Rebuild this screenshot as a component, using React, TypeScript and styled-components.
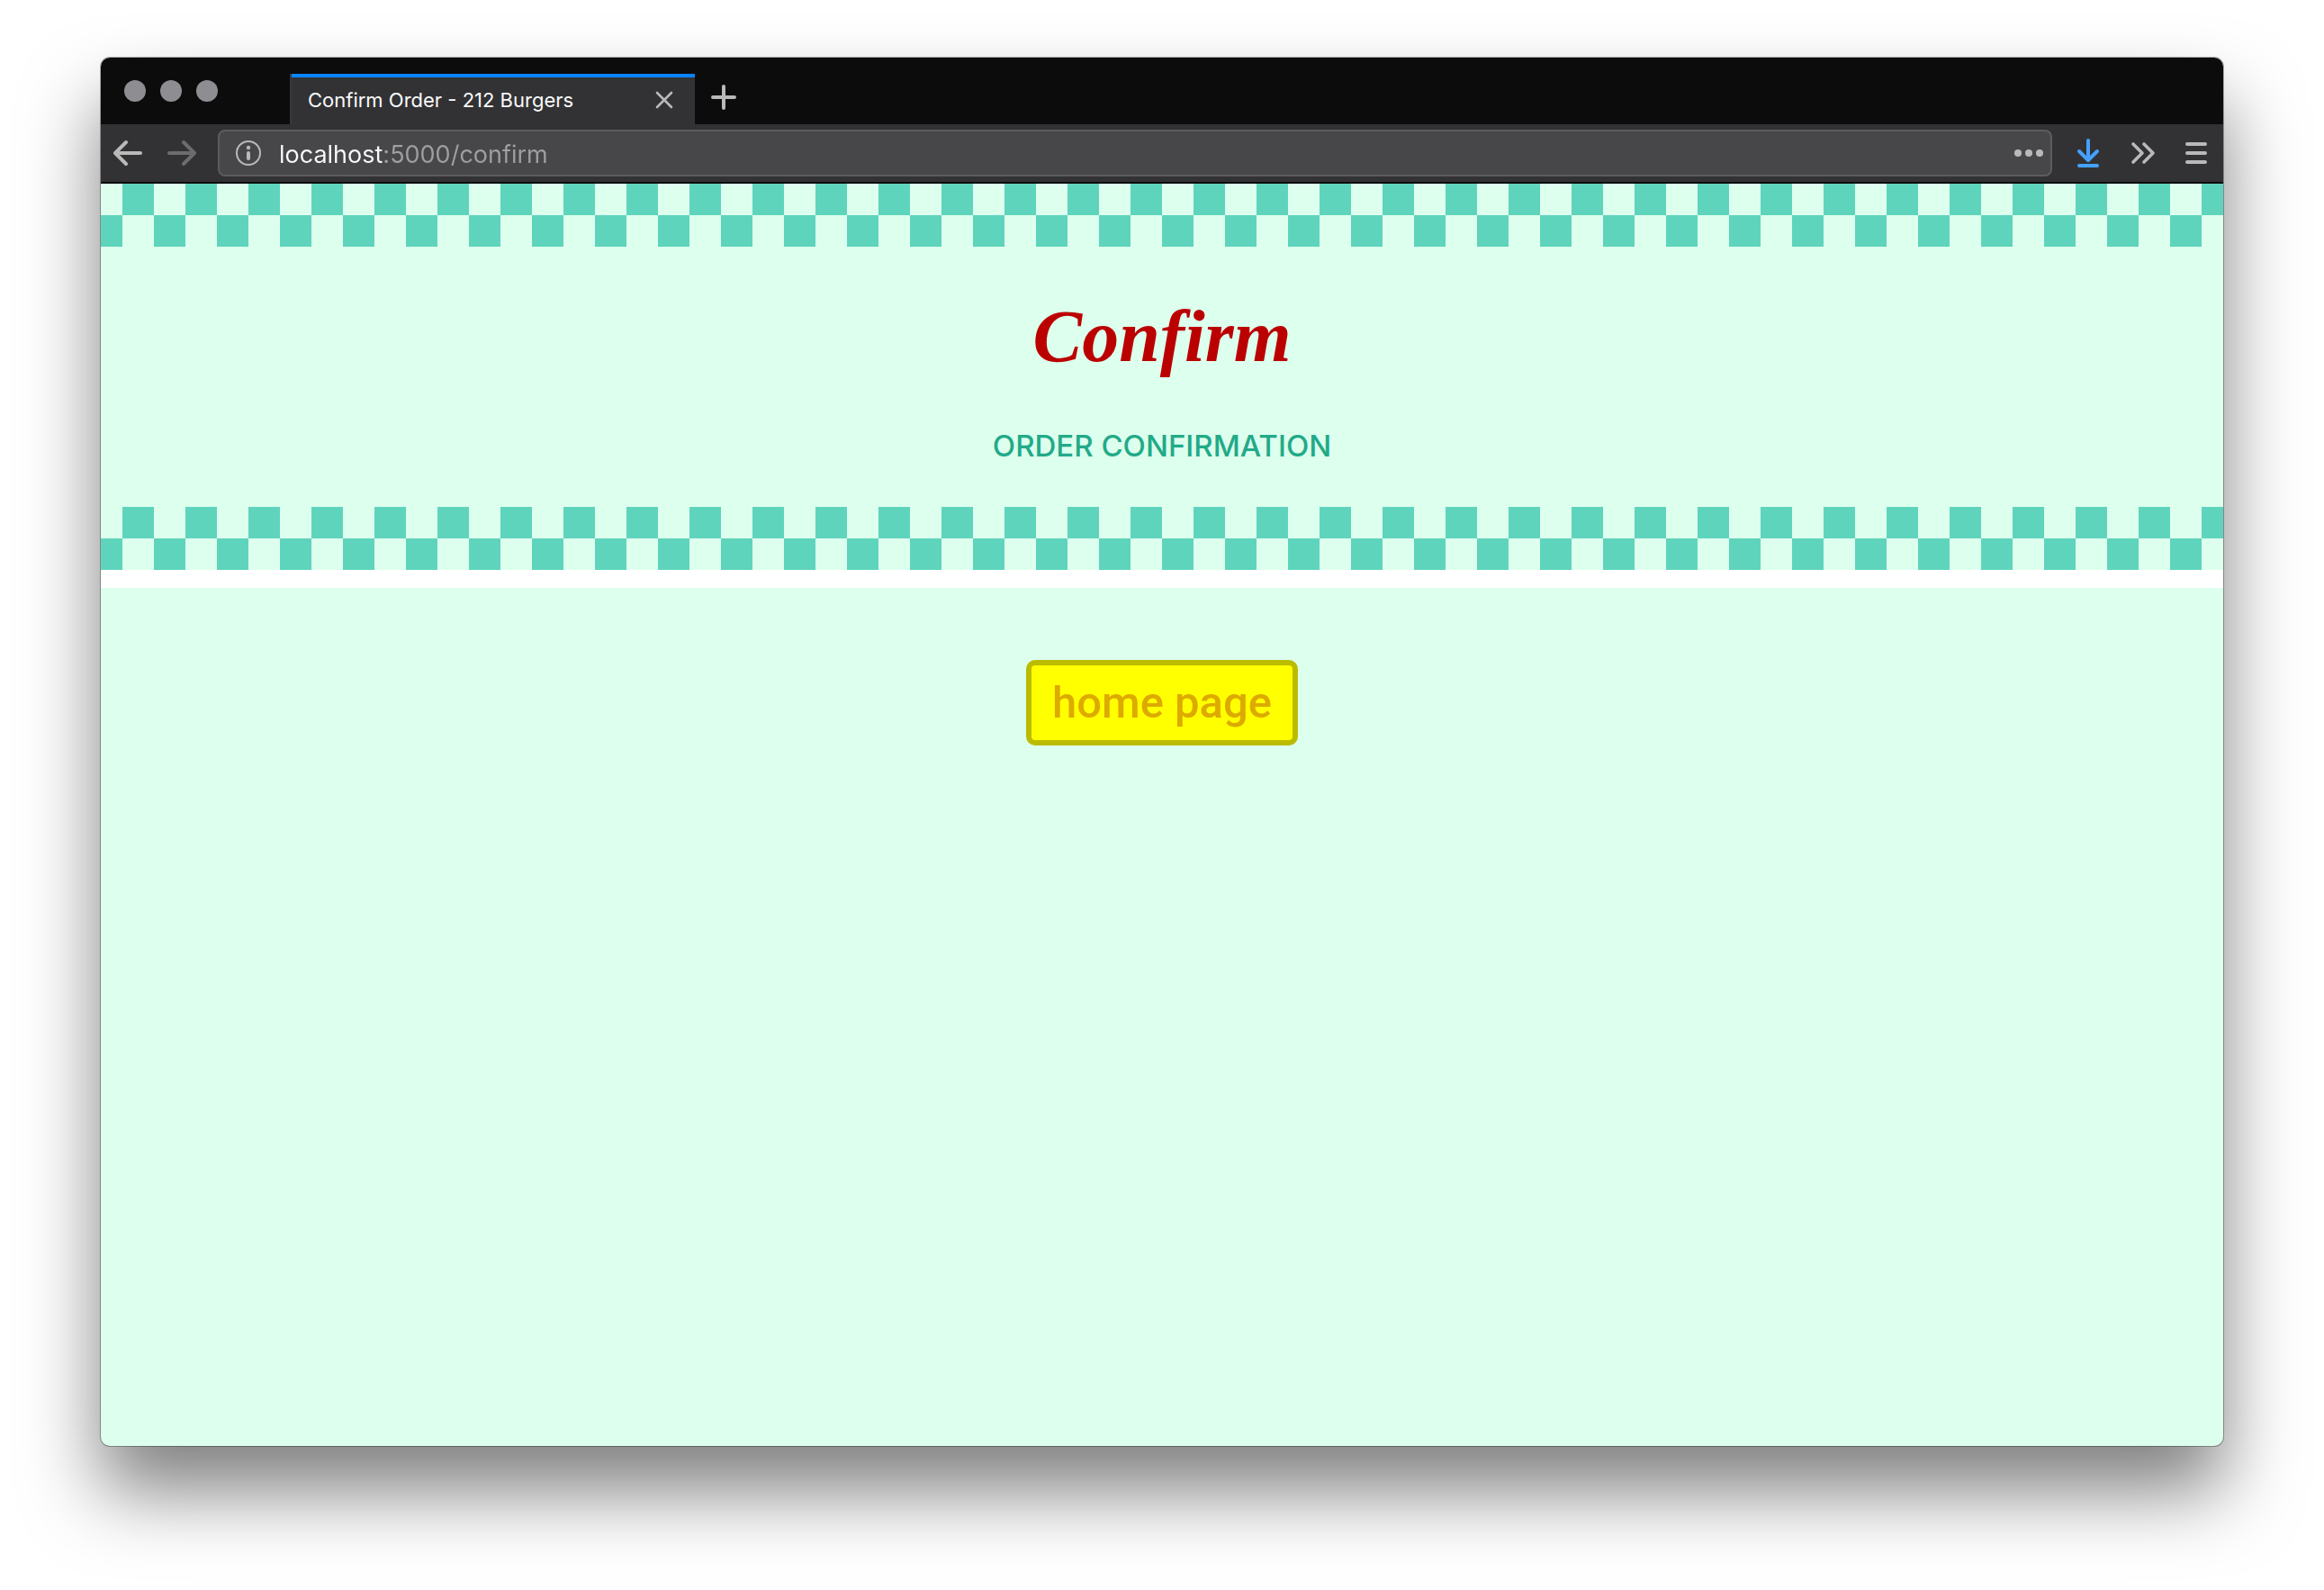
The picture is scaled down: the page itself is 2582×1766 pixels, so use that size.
import React from "react";
import styled, { createGlobalStyle } from "styled-components";

const color = {
  mint: "#ddffee",
  teal: "#5fd4bc",
  caption: "#22aa88",
  red: "#bb0000",
  yellow: "#ffff00",
  olive: "#bbbb00",
  mustard: "#ddaa00",
  titleBar: "#0c0c0d",
  toolbar: "#323234",
  field: "#474749",
  fieldEdge: "#5c5c5e",
  icon: "#b9b9ba",
  accent: "#0a84ff",
  download: "#45a1ff",
};

const uiFont = `Inter, Roboto, "Liberation Sans", sans-serif`;
const bodyFont = `Roboto, "Open Sans", sans-serif`;
const scriptFont = `"Liberation Serif", serif`;

const GlobalStyle = createGlobalStyle`
  *, *::before, *::after { box-sizing: border-box; }
  body { margin: 0; background: #fff; font-family: ${bodyFont}; }
`;

const Desktop = styled.div`
  display: flex;
  min-height: 100vh;
  padding: 64px 112px 160px;
  overflow: hidden;
`;

const BrowserWindow = styled.div`
  display: flex;
  flex: 1;
  flex-direction: column;
  min-width: 0;
  border-radius: 10px;
  background: ${color.mint};
  box-shadow: 0 0 0 1px rgba(0, 0, 0, 0.3), 0 50px 84px rgba(0, 0, 0, 0.5);
`;

const TitleBar = styled.div`
  display: flex;
  align-items: flex-end;
  height: 74px;
  border-radius: 10px 10px 0 0;
  background: ${color.titleBar};
  font-family: ${uiFont};
`;

const WindowControls = styled.div`
  display: flex;
  align-self: stretch;
  align-items: center;
  gap: 16px;
  width: 210px;
  padding-left: 26px;
`;

const WindowControl = styled.button`
  width: 24px;
  height: 24px;
  padding: 0;
  border: 0;
  border-radius: 50%;
  background: #8e8d92;
`;

const Tab = styled.div`
  display: flex;
  align-items: center;
  justify-content: space-between;
  width: 450px;
  height: 56px;
  padding: 2px 18px 0;
  border-left: 2px solid #38383a;
  background: linear-gradient(${color.accent} 4px, ${color.toolbar} 4px);
  color: #f9f9fa;
  font-size: 22px;
  line-height: 28px;
  white-space: nowrap;
`;

const IconButton = styled.button<{ $width: number; $tone?: string }>`
  display: flex;
  flex: none;
  align-items: center;
  justify-content: center;
  width: ${(p) => p.$width}px;
  height: ${(p) => (p.$width > 40 ? 60 : 32)}px;
  padding: 0;
  border: 0;
  background: none;
  color: ${(p) => p.$tone ?? color.icon};
`;

const Toolbar = styled.div`
  display: flex;
  align-items: center;
  height: 66px;
  border-bottom: 2px solid ${color.titleBar};
  background: ${color.toolbar};
  font-family: ${uiFont};
`;

const AddressBar = styled.label`
  display: flex;
  flex: 1;
  align-items: center;
  gap: 18px;
  height: 52px;
  margin: 0 10px;
  padding: 0 8px 0 16px;
  border: 2px solid ${color.fieldEdge};
  border-radius: 8px;
  background: ${color.field};
  color: ${color.icon};
`;

const AddressInput = styled.input`
  flex: 1;
  min-width: 0;
  height: 38px;
  padding: 2px 0 0;
  border: 0;
  outline: 0;
  background: linear-gradient(to right, #f9f9fa 116px, #9f9fa1 116px);
  background-clip: text;
  -webkit-text-fill-color: transparent;
  caret-color: #fff;
  color: #f9f9fa;
  font: 400 27px/36px ${uiFont};
`;

const Checkers = styled.div`
  height: 70px;
  background: conic-gradient(
      ${color.mint} 25%,
      ${color.teal} 0 50%,
      ${color.mint} 0 75%,
      ${color.teal} 0
    )
    center / 70px 70px;
`;

const Banner = styled.header`
  border-bottom: 20px solid #fff;
`;

const BannerText = styled.div`
  display: flex;
  flex-direction: column;
  align-items: center;
  gap: 53px;
  padding: 52px 24px 48px;
`;

const Title = styled.h1`
  margin: 0;
  color: ${color.red};
  font: italic 700 82px/96px ${scriptFont};
  font-variant-ligatures: none;
`;

const Caption = styled.h2`
  margin: 0;
  color: ${color.caption};
  font: 500 33px/40px ${uiFont};
  text-transform: uppercase;
`;

const Content = styled.main`
  display: flex;
  justify-content: center;
  padding: 80px 24px;
`;

const HomeLink = styled.a`
  padding: 12px 23px;
  border: 6px solid ${color.olive};
  border-radius: 10px;
  background: ${color.yellow};
  color: ${color.mustard};
  font: 500 49px/59px ${bodyFont};
  text-decoration: none;
`;

const Glyph = styled.svg`
  display: block;
  flex: none;
  fill: none;
  stroke: currentColor;
  stroke-linecap: round;
  stroke-linejoin: round;
`;

const arrowPath =
  "M15 7H3.414l4.293-4.293a1 1 0 0 0-1.414-1.414l-6 6a1 1 0 0 0 0 1.414l6 6a1 1 0 0 0 1.414-1.414L3.414 9H15a1 1 0 0 0 0-2z";

const BackIcon = () => (
  <Glyph width="32" height="32" viewBox="0 0 16 16">
    <path d={arrowPath} fill="currentColor" stroke="none" />
  </Glyph>
);

const ForwardIcon = () => (
  <Glyph width="32" height="32" viewBox="0 0 16 16">
    <path d={arrowPath} fill="currentColor" stroke="none" transform="matrix(-1 0 0 1 16 0)" />
  </Glyph>
);

const InfoIcon = () => (
  <Glyph width="32" height="32" viewBox="0 0 32 32" strokeWidth="2">
    <circle cx="16" cy="16" r="13" />
    <circle cx="16" cy="10" r="2.2" fill="currentColor" stroke="none" />
    <path d="M16 16v6" strokeWidth="4" />
  </Glyph>
);

const MoreIcon = () => (
  <Glyph width="32" height="32" viewBox="0 0 32 32">
    <g fill="currentColor" stroke="none">
      <circle cx="4" cy="16" r="4" />
      <circle cx="16" cy="16" r="4" />
      <circle cx="28" cy="16" r="4" />
    </g>
  </Glyph>
);

const DownloadIcon = () => (
  <Glyph width="32" height="32" viewBox="0 0 32 32" strokeWidth="4">
    <path d="M16 2v22M6 14l10 10 10-10M6 30h20" />
  </Glyph>
);

const OverflowIcon = () => (
  <Glyph width="32" height="32" viewBox="0 0 32 32" strokeWidth="3.6">
    <path d="M6 6l10 10-10 10M18 6l10 10-10 10" />
  </Glyph>
);

const MenuIcon = () => (
  <Glyph width="32" height="32" viewBox="0 0 32 32" strokeWidth="4">
    <path d="M6 6h20M6 16h20M6 26h20" />
  </Glyph>
);

const CloseIcon = () => (
  <Glyph width="20" height="20" viewBox="0 0 20 20" strokeWidth="2.6">
    <path d="M2 2l16 16M18 2L2 18" />
  </Glyph>
);

const PlusIcon = () => (
  <Glyph width="32" height="32" viewBox="0 0 32 32" strokeWidth="4">
    <path d="M16 4v24M4 16h24" />
  </Glyph>
);

export default function App() {
  return (
    <>
      <GlobalStyle />
      <Desktop>
        <BrowserWindow>
          <TitleBar>
            <WindowControls>
              <WindowControl aria-label="Close window" />
              <WindowControl aria-label="Minimize window" />
              <WindowControl aria-label="Zoom window" />
            </WindowControls>
            <Tab>
              Confirm Order - 212 Burgers
              <IconButton $width={32} aria-label="Close tab">
                <CloseIcon />
              </IconButton>
            </Tab>
            <IconButton $width={64} aria-label="New tab">
              <PlusIcon />
            </IconButton>
          </TitleBar>
          <Toolbar>
            <IconButton $width={60} aria-label="Back">
              <BackIcon />
            </IconButton>
            <IconButton $width={60} $tone="#6c6c6e" aria-label="Forward">
              <ForwardIcon />
            </IconButton>
            <AddressBar>
              <InfoIcon />
              <AddressInput type="text" aria-label="Address" defaultValue="localhost:5000/confirm" />
              <IconButton $width={32} aria-label="Page actions">
                <MoreIcon />
              </IconButton>
            </AddressBar>
            <IconButton $width={60} $tone={color.download} aria-label="Downloads">
              <DownloadIcon />
            </IconButton>
            <IconButton $width={60} aria-label="More tools">
              <OverflowIcon />
            </IconButton>
            <IconButton $width={60} aria-label="Menu">
              <MenuIcon />
            </IconButton>
          </Toolbar>
          <Banner>
            <Checkers />
            <BannerText>
              <Title>Confirm</Title>
              <Caption>Order Confirmation</Caption>
            </BannerText>
            <Checkers />
          </Banner>
          <Content>
            <HomeLink href="#home">home page</HomeLink>
          </Content>
        </BrowserWindow>
      </Desktop>
    </>
  );
}
